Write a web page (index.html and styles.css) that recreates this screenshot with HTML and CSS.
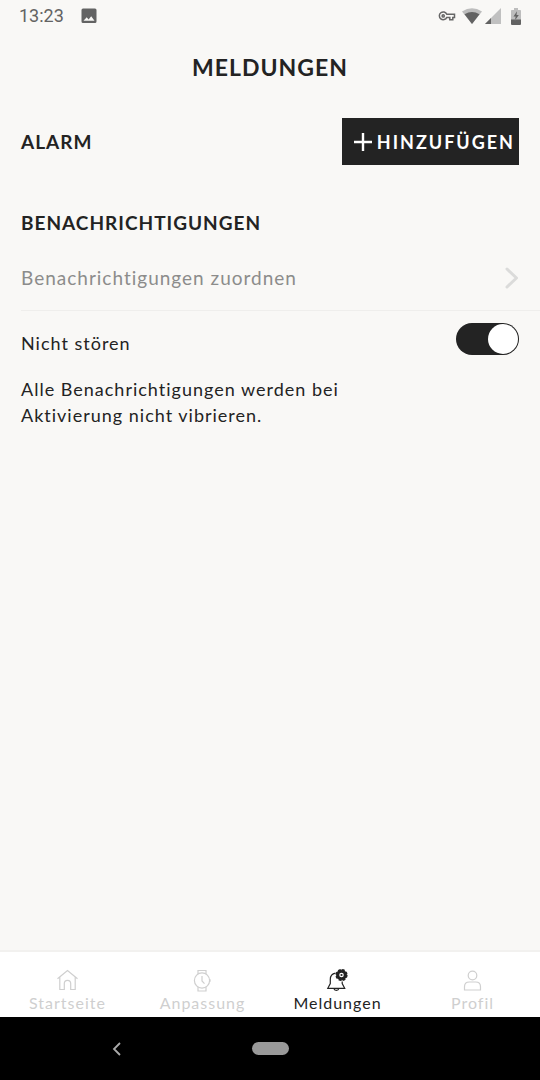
FILE: index.html
```html
<!DOCTYPE html>
<html lang="de">
<head>
<meta charset="utf-8">
<meta name="viewport" content="width=device-width, initial-scale=1">
<title>Meldungen</title>
<link rel="stylesheet" href="styles.css">
</head>
<body>
<div class="status">
  <span class="clock">13:23</span>
  <svg class="picture" width="16" height="16" viewBox="0 0 16 16" aria-hidden="true"><path fill="#636363" fill-rule="evenodd" d="M2 0.5h12a1.5 1.5 0 0 1 1.5 1.5v11.500a1.500 1.500 0 0 1-1.500 1.500H2A1.500 1.500 0 0 1 .5 13.500V2A1.500 1.500 0 0 1 2 .5zM2.500 12.800h11L10.200 8.300 7.600 11.500 5.700 9.300z"/></svg>
  <div class="indicators">
    <svg width="18" height="12" viewBox="0 0 18 12" fill="none" stroke="#666" stroke-width="1.500" aria-hidden="true"><path d="M8.800 4.200h7.700v3.200h-1.700v2.300h-3V7.400h-3A3.900 3.900 0 1 1 8.800 4.200z"/><circle cx="5.200" cy="5.900" r="1.100"/></svg>
    <svg class="wifi" width="20" height="16" viewBox="0 0 20 16" aria-hidden="true"><path fill="#bdbdbd" d="M0 3.500Q10-3.200 20 3.500L10 16z"/><path fill="#626262" d="M2.500 6.300Q10 1.500 17.500 6.300L10 16z"/></svg>
    <svg class="signal" width="16" height="16" viewBox="0 0 16 16" aria-hidden="true"><path fill="#c0c0c0" d="M16 0v16H0z"/><path fill="#626262" d="M6 10v6H0z"/></svg>
    <svg class="battery" width="10" height="17" viewBox="0 0 10 17" aria-hidden="true"><path fill="#bdbdbd" d="M3 0h4v2h2.200q.8 0 .8.800V12H0V2.800Q0 2 .8 2H3z"/><path fill="#626262" d="M0 11.500h10v4.500q0 1-1 1H1q-1 0-1-1zM6 3.200 2.500 8.500h2.200L3.900 12.500 7.800 7H5.500z"/></svg>
  </div>
</div>
<header class="header"><h1 class="title">MELDUNGEN</h1></header>
<main class="content">
  <section class="alarm">
    <h2 class="heading">ALARM</h2>
    <button class="add" type="button">
      <svg width="18" height="18" viewBox="0 0 18 18" fill="none" stroke="#fff" stroke-width="2.400" aria-hidden="true"><path d="M9 0v18M0 9h18"/></svg>
      <span>HINZUFÜGEN</span>
    </button>
  </section>
  <section class="notifications">
    <h2 class="heading">BENACHRICHTIGUNGEN</h2>
    <a class="assign" href="#zuordnen">
      <span>Benachrichtigungen zuordnen</span>
      <svg width="14" height="22" viewBox="0 0 14 22" fill="none" stroke="#dbdbda" stroke-width="3" stroke-linecap="round" stroke-linejoin="round" aria-hidden="true"><path d="M2 2l9.500 9L2 20"/></svg>
    </a>
    <div class="quiet">
      <label class="quiet-label" for="dnd">Nicht stören</label>
      <input class="switch" id="dnd" type="checkbox" role="switch" aria-describedby="dnd-info" checked>
    </div>
    <p class="info" id="dnd-info">Alle Benachrichtigungen werden bei Aktivierung nicht vibrieren.</p>
  </section>
</main>
<nav class="tabs">
  <a class="tab" href="#start">
    <svg width="24" height="24" viewBox="0 0 24 24" aria-hidden="true"><path d="M1.500 10.800 11.500 2.500l10 8.300M3.800 9v12.500h4.500V15.600a3.200 3.200 0 0 1 6.400 0v5.900h4.500V9"/></svg>
    <span>Startseite</span>
  </a>
  <a class="tab" href="#anpassung">
    <svg width="24" height="24" viewBox="0 0 24 24" aria-hidden="true"><circle cx="11" cy="12.500" r="7.600"/><path d="M7 6V2.500h8V6M7 19v4h8v-4M11 8v5l2.500 2.600M19 11.200v2.500"/></svg>
    <span>Anpassung</span>
  </a>
  <a class="tab active" href="#meldungen" aria-current="page">
    <svg width="24" height="24" viewBox="0 0 24 24" aria-hidden="true"><path d="M9.500 5.200C5.800 5.800 4.300 8.200 4.300 11.500v4L1.800 20.300h16.900l-2.500-4.800v-2M7.800 20.500c.5 2.600 4.600 2.600 5.100 0"/><circle class="fill" cx="15.500" cy="7" r="4.800"/><circle cx="15.500" cy="7" r="5" stroke-width="2.200" stroke-dasharray="2.500 1.427"/><circle class="ring" cx="15.500" cy="7" r="1.700"/></svg>
    <span>Meldungen</span>
  </a>
  <a class="tab" href="#profil">
    <svg width="24" height="24" viewBox="0 0 24 24" aria-hidden="true"><circle cx="11.500" cy="7.500" r="4.300"/><path d="M3.500 22v-3.200q0-4.800 4.800-4.800h6.400q4.800 0 4.800 4.800V22z"/></svg>
    <span>Profil</span>
  </a>
</nav>
<div class="system">
  <button class="back" type="button" aria-label="Zurück"><svg width="10" height="14" viewBox="0 0 10 14" fill="none" stroke="#aaa" stroke-width="1.800" aria-hidden="true"><path d="M8 1 2 7l6 6"/></svg></button>
  <button class="home" type="button" aria-label="Startbildschirm"></button>
</div>
</body>
</html>
```
FILE: styles.css
```css
* { box-sizing: border-box; }
body {
  margin: 0;
  min-height: 100vh;
  display: flex;
  flex-direction: column;
  background: #f9f8f6;
  color: #232323;
  font-family: Lato, "Noto Sans", sans-serif;
  font-size: 18px;
  line-height: 26px;
  letter-spacing: 1px;
}
h1, h2, p { margin: 0; }
button { padding: 0; border: 0; font: inherit; letter-spacing: inherit; }
a { color: inherit; text-decoration: none; }
svg { display: block; flex: none; }

.status {
  display: flex;
  align-items: center;
  gap: 17px;
  height: 32px;
  padding: 0 19px;
  color: #636363;
  font: 400 18px/32px Roboto, sans-serif;
  letter-spacing: 0;
}
.indicators { display: flex; align-items: center; margin-left: auto; }
.wifi { margin-left: 6px; }
.signal { margin-left: 3px; }
.battery { margin-left: 10px; }

.header {
  display: flex;
  align-items: center;
  justify-content: center;
  height: 70px;
}
.title { font-size: 23px; font-weight: 700; }

.content { flex: 1; padding: 16px 0 24px 21px; }
.alarm {
  display: flex;
  align-items: center;
  justify-content: space-between;
  padding-right: 21px;
}
.heading { font-size: 19px; font-weight: 700; }
.add {
  display: flex;
  align-items: center;
  gap: 5px;
  height: 47px;
  padding: 0 4px 0 12px;
  background: #232323;
  color: #fff;
  font-size: 18px;
  font-weight: 700;
  letter-spacing: 2px;
}
.notifications { padding-top: 45px; }
.assign {
  display: flex;
  align-items: center;
  justify-content: space-between;
  height: 65px;
  margin-top: 10px;
  padding-right: 21px;
  border-bottom: 1px solid #efeeec;
  color: #8c8c8b;
  font-size: 19px;
}
.quiet {
  display: flex;
  align-items: flex-start;
  justify-content: space-between;
  padding: 12px 21px 20px 0;
}
.quiet-label { padding-top: 7px; }
.switch {
  appearance: none;
  width: 63px;
  height: 32px;
  margin: 0;
  padding: 1px;
  border-radius: 16px;
  background: #c8c8c8;
}
.switch::before {
  content: "";
  display: block;
  width: 30px;
  height: 30px;
  border-radius: 50%;
  background: #fff;
}
.switch:checked { background: #232323; }
.switch:checked::before { margin-left: auto; }
.info { max-width: 360px; }

.tabs {
  display: grid;
  grid-template-columns: repeat(4, 1fr);
  height: 67px;
  border-top: 2px solid #f2f1ef;
  background: #fff;
}
.tab {
  display: flex;
  flex-direction: column;
  align-items: center;
  padding-top: 16px;
  color: #cfcfcf;
  font-size: 16px;
  line-height: 22px;
}
.tab svg { fill: none; stroke: currentColor; stroke-width: 1.2; }
.tab.active { color: #232323; }
.tab .fill { fill: currentColor; }
.tab .ring { fill: #232323; stroke: #fff; }

.system {
  display: grid;
  grid-template-columns: 1fr auto 1fr;
  align-items: center;
  height: 63px;
  background: #000;
}
.back {
  justify-self: center;
  padding: 12px 30px 12px 12px;
  background: transparent;
}
.home { width: 37px; height: 13px; border-radius: 7px; background: #999; }
```
